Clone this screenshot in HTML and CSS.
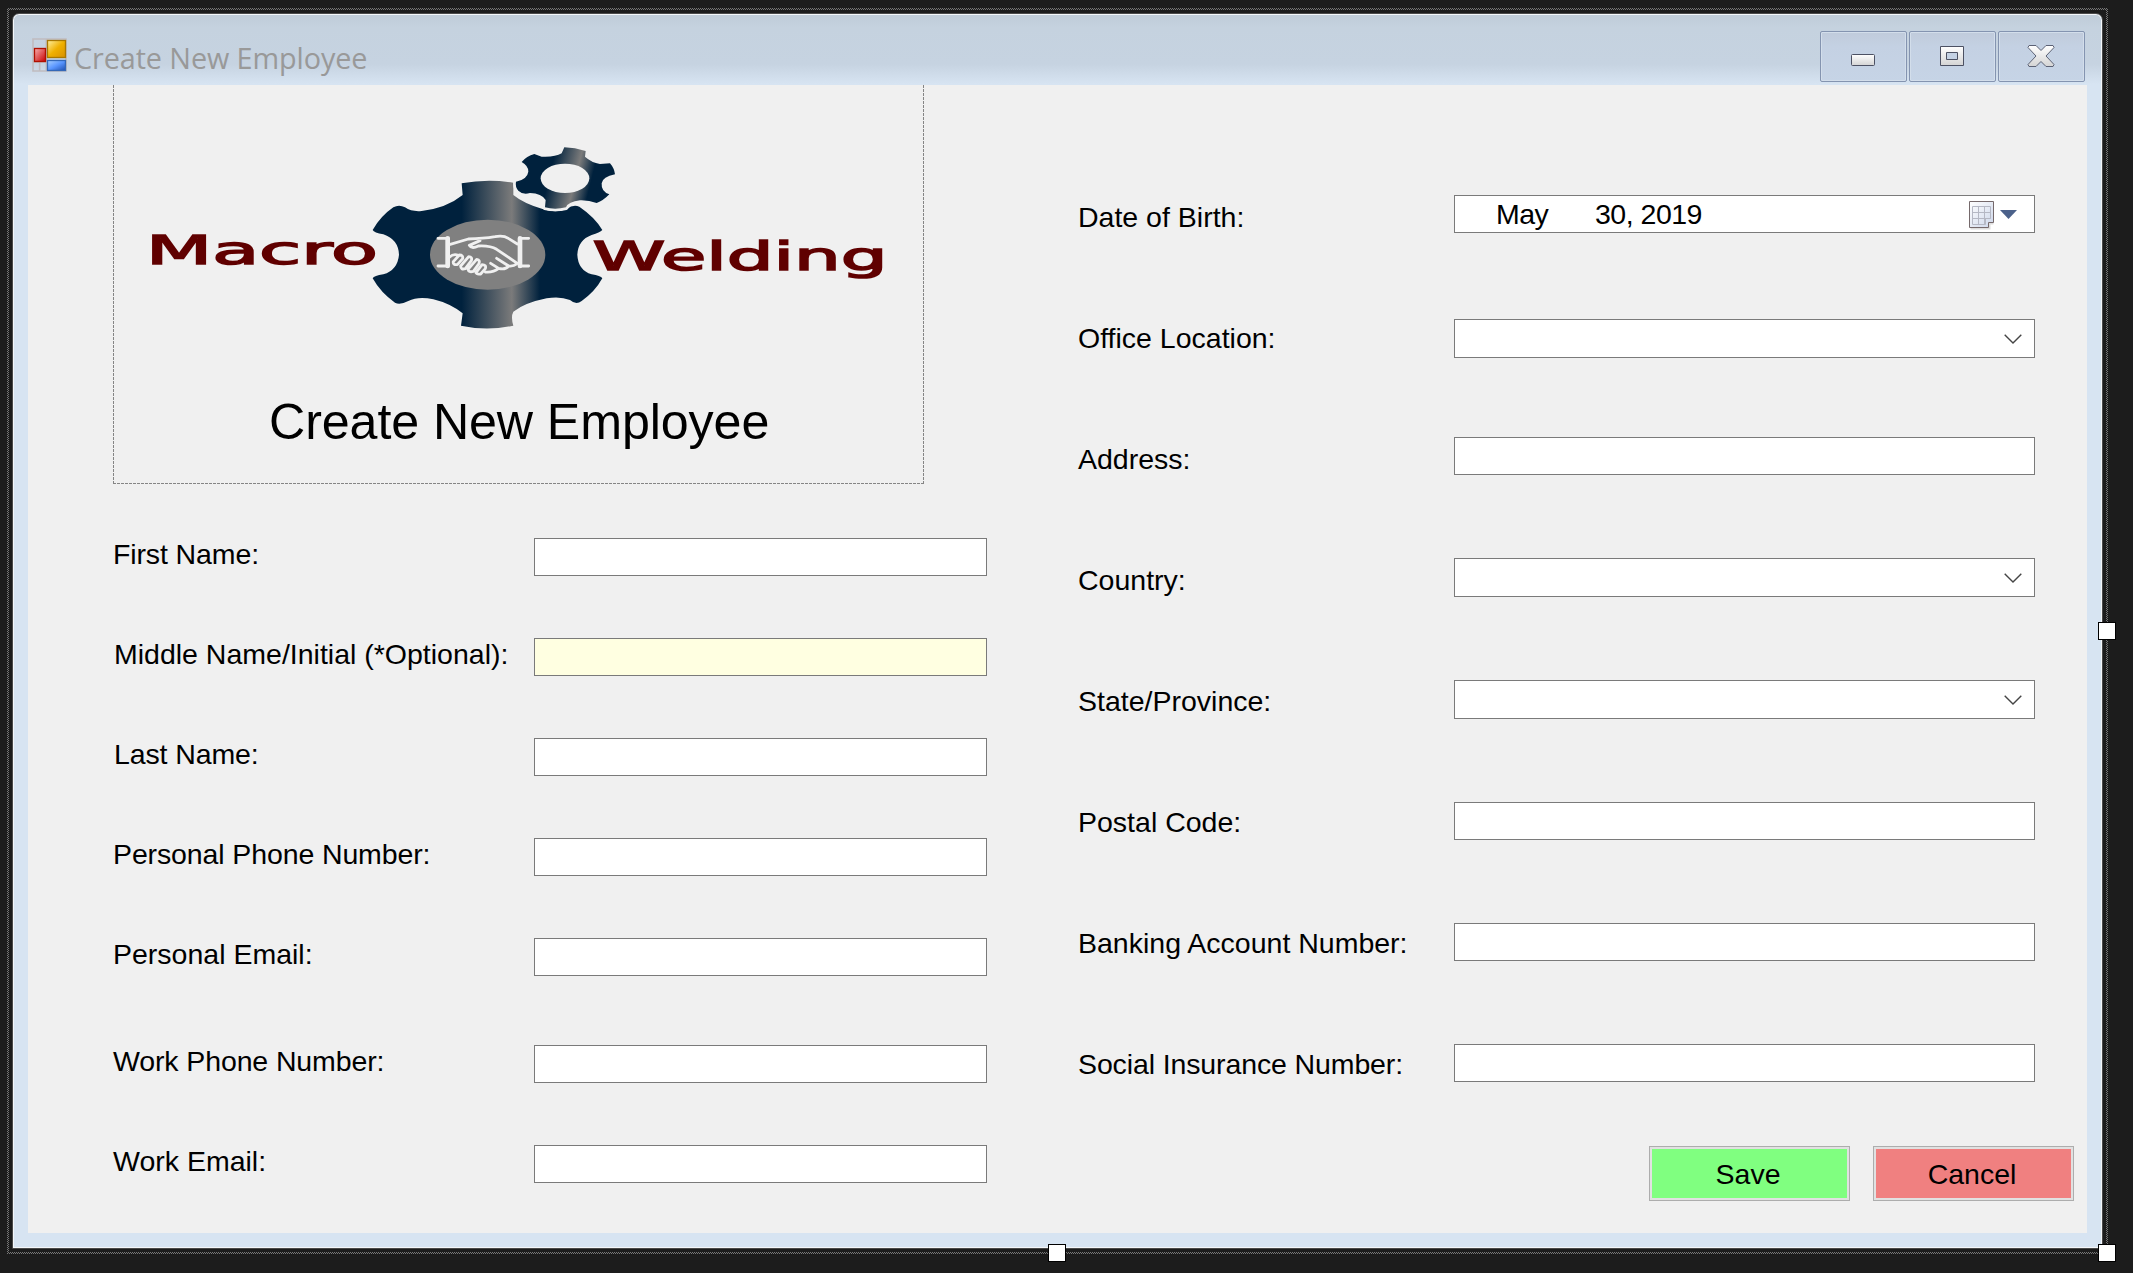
FILE: index.html
```html
<!DOCTYPE html>
<html lang="en">
<head>
<meta charset="utf-8">
<title>Create New Employee</title>
<link rel="stylesheet" href="styles.css">
</head>
<body>
<div class="selection">
<main class="window">
  <header class="titlebar">
    <svg class="app-icon" width="35" height="34" viewBox="0 0 105 102">
      <defs>
        <linearGradient id="yel" x1="0" y1="0" x2="1" y2="1"><stop offset="0" stop-color="#fff0a0"/><stop offset=".5" stop-color="#efb000"/><stop offset="1" stop-color="#d89000"/></linearGradient>
        <linearGradient id="red" x1="0" y1="0" x2="1" y2="1"><stop offset="0" stop-color="#f8b0b0"/><stop offset="1" stop-color="#c80000"/></linearGradient>
        <linearGradient id="blu" x1="0" y1="0" x2="1" y2="1"><stop offset="0" stop-color="#a8d0ff"/><stop offset=".5" stop-color="#5a96ff"/><stop offset="1" stop-color="#2050b0"/></linearGradient>
      </defs>
      <path d="M3 3H102V99H3ZM43 3V99M3 72H43M23 72V99" fill="none" stroke="#c0bcc0" stroke-width="5"/>
      <rect x="46.500" y="7.500" width="54" height="51" fill="url(#yel)" stroke="#a87800" stroke-width="4"/>
      <rect x="7.500" y="31.500" width="33" height="39" fill="url(#red)" stroke="#b01000" stroke-width="4"/>
      <rect x="46.500" y="67.500" width="54" height="30" fill="url(#blu)" stroke="#3468b8" stroke-width="4"/>
    </svg>
    <h1 class="title">Create New Employee</h1>
    <div class="controls">
      <span class="control"><svg width="87" height="51" viewBox="0 0 87 51"><rect x="31.500" y="23.500" width="23" height="11" rx="1" fill="url(#btn)" stroke="#4c5163"/></svg></span>
      <span class="control"><svg width="87" height="51" viewBox="0 0 87 51"><path d="M31.500 15.500h23v19h-23zM37.500 21.500v7h11v-7z" fill="url(#btn)" fill-rule="evenodd" stroke="#4c5163"/></svg></span>
      <span class="control"><svg width="87" height="51" viewBox="0 0 87 51"><defs><linearGradient id="btn" x1="0" y1="0" x2="0" y2="1"><stop offset="0" stop-color="#fff"/><stop offset="1" stop-color="#d4d4d4"/></linearGradient></defs><path d="M31 14.500h7l5 5 5-5h7l1 2-8 8.500 8 8.500-1 2h-7l-5-5-5 5h-7l-1-2 8-8.500-8-8.500z" fill="url(#btn)" stroke="#5c6275"/></svg></span>
    </div>
  </header>
  <section class="client">
    <div class="left">
      <div class="banner">
        <svg class="logo" width="811" height="300" viewBox="113 85 811 300">
          <defs>
            <linearGradient id="steel" gradientUnits="userSpaceOnUse" x1="1085" y1="0" x2="1320" y2="0"><stop offset="0" stop-color="#00213d"/><stop offset=".64" stop-color="#7b7b7b"/><stop offset="1" stop-color="#00213d"/></linearGradient>
            <linearGradient id="steel2" gradientUnits="userSpaceOnUse" x1="1350" y1="160" x2="1472" y2="190"><stop offset="0" stop-color="#00213d"/><stop offset=".62" stop-color="#7b7b7b"/><stop offset="1" stop-color="#00213d"/></linearGradient>
          </defs>
          <g transform="translate(100 120) scale(.33333)">
            <path fill="url(#steel)" d="M1085 190Q1162 175 1240 188V225Q1270 250 1330 268Q1370 280 1400 267Q1420 252 1438 260Q1485 292 1507 330Q1500 338 1475 345Q1434 360 1432 404Q1434 450 1475 463Q1502 467 1507 475Q1485 515 1445 543Q1428 556 1410 540Q1380 528 1340 535Q1275 548 1240 575Q1232 590 1240 617Q1160 634 1083 617L1088 580Q1050 550 1000 538Q955 528 925 543Q900 556 885 548Q842 518 818 475Q822 467 850 463Q893 450 897 404Q895 358 850 343Q822 338 818 330Q842 288 880 262Q897 252 915 262Q935 276 965 273Q1040 264 1088 225Z"/>
            <path fill="url(#steel2)" stroke="#f0f0f0" stroke-width="16" stroke-linejoin="round" paint-order="stroke" d="M1393 82Q1425 82 1457 93L1455 110Q1475 128 1500 132L1530 130Q1543 145 1545 163Q1508 170 1505 190Q1503 215 1528 223Q1510 242 1490 249Q1465 240 1440 241Q1405 245 1398 262Q1365 270 1335 262L1337 240Q1325 220 1290 219Q1268 225 1255 212Q1245 200 1248 185Q1282 178 1285 155Q1286 138 1265 126Q1280 108 1303 102L1325 110Q1365 112 1385 100Z"/>
            <ellipse cx="1395" cy="175" rx="73" ry="44" fill="#f0f0f0"/>
            <ellipse cx="1163" cy="404" rx="173" ry="105" fill="#808080"/>
            <g fill="none" stroke="#f0f0f0" stroke-width="8.500" stroke-linecap="round" stroke-linejoin="round">
              <path d="M1014 355H1045M1014 438H1045M1286 355H1258M1286 438H1258"/>
              <path d="M1043 355V438M1260 355V438" stroke-width="14"/>
              <path d="M1048 374Q1075 366 1105 357Q1150 356 1185 350Q1210 345 1225 355L1252 372M1140 362L1108 376Q1115 388 1135 378Q1170 376 1190 388L1252 430M1048 412Q1060 400 1075 406M1060 425L1078 405Q1090 405 1088 416L1072 434Q1058 435 1060 425M1082 438L1106 410Q1118 410 1114 422L1096 446Q1082 450 1082 438M1104 448L1130 418Q1142 420 1136 432L1120 454Q1106 458 1104 448M1128 458L1146 434Q1160 434 1156 446L1142 462Q1130 464 1128 458M1156 456Q1180 458 1196 445L1172 430M1196 445Q1216 450 1226 438L1190 415M1226 438Q1240 440 1250 432"/>
            </g>
          </g>
          <g class="wordmark">
            <text x="146" y="263.500" textLength="232" lengthAdjust="spacingAndGlyphs">Macro</text>
            <text x="592.500" y="270" textLength="295" lengthAdjust="spacingAndGlyphs">Welding</text>
          </g>
        </svg>
        <h2 class="heading">Create New Employee</h2>
      </div>
      <div class="fields personal">
        <label class="row"><span class="snug">First Name:</span><input class="box"></label>
        <label class="row"><span class="inset">Middle Name/Initial (*Optional):</span><input class="box optional"></label>
        <label class="row"><span class="inset snug">Last Name:</span><input class="box"></label>
        <label class="row"><span class="snug">Personal Phone Number:</span><input class="box"></label>
        <label class="row"><span>Personal Email:</span><input class="box"></label>
        <label class="row work"><span class="snug">Work Phone Number:</span><input class="box"></label>
        <label class="row"><span>Work Email:</span><input class="box"></label>
      </div>
    </div>
    <div class="right">
      <div class="fields details">
        <div class="row date"><span>Date of Birth:</span><div class="box picker"><span class="month">May</span><span class="day">30, 2019</span>
          <svg class="calendar" width="52" height="32" viewBox="0 0 52 32"><defs><linearGradient id="page" x1="0" y1="0" x2="1" y2="1"><stop offset="0" stop-color="#fff"/><stop offset="1" stop-color="#ccd6ea"/></linearGradient></defs><path d="M3.500 29.500h19v-5h4" fill="none" stroke="#ddd" stroke-width="2"/><path d="M2.500 2.500h24v21h-5v5h-19z" fill="url(#page)" stroke="#75696b"/><path d="M5.500 7.500h18v12h-5v6h-13zM11.500 7.500v18M17.500 7.500v18M5.500 13.500h18M5.500 19.500h18" fill="none" stroke="#b5b8c4"/><path d="M33 11h17l-8.500 9z" fill="#4b618a"/></svg>
        </div></div>
        <div class="row office"><span>Office Location:</span><div class="box combo"><svg width="18" height="10" viewBox="0 0 18 10"><path d="M.7.700L9 9l8.300-8.300"/></svg></div></div>
        <label class="row"><span>Address:</span><input class="box"></label>
        <div class="row country"><span>Country:</span><div class="box combo"><svg width="18" height="10" viewBox="0 0 18 10"><path d="M.7.700L9 9l8.300-8.300"/></svg></div></div>
        <div class="row state"><span>State/Province:</span><div class="box combo"><svg width="18" height="10" viewBox="0 0 18 10"><path d="M.7.700L9 9l8.300-8.300"/></svg></div></div>
        <label class="row low"><span>Postal Code:</span><input class="box"></label>
        <label class="row low"><span>Banking Account Number:</span><input class="box"></label>
        <label class="row low"><span class="snug">Social Insurance Number:</span><input class="box"></label>
      </div>
      <div class="actions">
        <button class="action save">Save</button>
        <button class="action cancel">Cancel</button>
      </div>
    </div>
  </section>
</main>
<i class="handle east"></i>
<i class="handle south"></i>
<i class="handle corner"></i>
</div>
</body>
</html>
```
FILE: styles.css
```css
* { box-sizing: border-box; }
html, body { height: 100%; overflow: hidden; }
body {
  margin: 0;
  padding: 8px 0 0 7px;
  background: #1c1c1c;
  color: #000;
  font: 28.5px/32px "Liberation Sans", Arial, sans-serif;
}
.selection {
  position: relative;
  width: 2101px;
  height: 1246px;
  padding: 5px;
  background:
    linear-gradient(#1c1c1c, #1c1c1c) 2px 2px / 2097px 1242px no-repeat,
    repeating-conic-gradient(#767676 0 25%, #1c1c1c 0 50%) 0 0 / 2px 2px;
}
.window {
  display: flex;
  flex-direction: column;
  width: 2091px;
  height: 1236px;
  padding: 0 15px 15px;
  border: 1px solid #4a4a4a;
  border-radius: 7px 7px 0 0;
  box-shadow: inset 0 0 0 1px #f4f7fa;
  background: linear-gradient(#bfccd8, #c5d2df 14px, #c6d3e1 50px, #d7e4f2 70px);
}
.titlebar { display: flex; height: 71px; flex: none; padding: 17px 2px 0 3px; }
.app-icon { flex: none; margin: 7px 0 0 1px; }
.title {
  margin: 7px auto 0 7px;
  color: #999;
  font: 400 28.8px/40px "Open Sans", "Noto Sans", sans-serif;
  letter-spacing: -.1px;
  white-space: nowrap;
}
.controls { display: flex; gap: 2px; }
.control {
  width: 87px;
  height: 51px;
  border: 1px solid #8494b0;
  border-radius: 2px;
  box-shadow: inset 0 0 0 1px #d3deeb;
  background: linear-gradient(#c0cbdb, #c4d1e3 30%, #c6d4e6);
}
.control svg { display: block; margin: -1px; }
.client { display: flex; flex: 1; background: #f0f0f0; }
.left { width: 959px; padding-left: 85px; }
.banner {
  width: 811px;
  height: 399px;
  background:
    repeating-linear-gradient(#858585 0 3px, transparent 3px 4px) left / 1px 100% no-repeat,
    repeating-linear-gradient(#858585 0 3px, transparent 3px 4px) right / 1px 100% no-repeat,
    repeating-linear-gradient(90deg, #858585 0 3px, transparent 3px 4px) bottom / 100% 1px no-repeat;
}
.logo { display: block; }
.wordmark {
  fill: #600000;
  stroke: #600000;
  stroke-width: 1.5px;
  font: 39.5px "DejaVu Sans", sans-serif;
}
.heading { margin: 8px 0 0 156px; font-size: 50.2px; font-weight: 400; line-height: 58px; letter-spacing: -.1px; white-space: nowrap; }
.fields { display: flex; flex-direction: column; }
.row { display: flex; justify-content: space-between; height: 38px; white-space: nowrap; }
.snug { letter-spacing: -.12px; }
.inset { padding-left: 1px; }
.box { height: 38px; margin: 0; padding: 0 8px; border: 1px solid #7a7a7a; background: #fff; outline: 0; font: inherit; }
.personal { width: 874px; gap: 62px; margin-top: 54px; }
.personal .box { width: 453px; }
.personal .work { margin-top: 7px; }
.personal .optional { background: #ffffe1; }
.right { width: 1100px; padding: 110px 0 0 89px; }
.details { width: 959px; gap: 83px; }
.details .box { width: 581px; }
.details .row > span { padding: 6px 0 0 2px; }
.office .box { margin-top: 3px; height: 39px; }
.country .box { height: 39px; }
.state .box { margin-top: 1px; height: 39px; }
.low .box { margin-top: 2px; }
.combo { display: flex; justify-content: flex-end; align-items: center; padding: 0 12px; }
.combo path { fill: none; stroke: #444; stroke-width: 1.4; }
.picker { display: flex; padding: 3px 15px 0 41px; letter-spacing: -.5px; line-height: 31px; }
.month { width: 99px; }
.calendar { margin: 0 0 0 auto; }
.actions { display: flex; gap: 23px; margin: 66px 0 0 573px; }
.action {
  width: 201px;
  height: 55px;
  padding: 0 3px 0 0;
  border: 1px solid #adadad;
  box-shadow: inset 0 0 0 2px #e1e1e1;
  color: #000;
  font: inherit;
}
.save { background: #80ff80; }
.cancel { background: #f08080; }
.handle { position: absolute; width: 18px; height: 18px; border: 1px solid #000; background: #fff; }
.east { left: 2091px; top: 614px; }
.south { left: 1041px; top: 1236px; }
.corner { left: 2091px; top: 1236px; }
```
